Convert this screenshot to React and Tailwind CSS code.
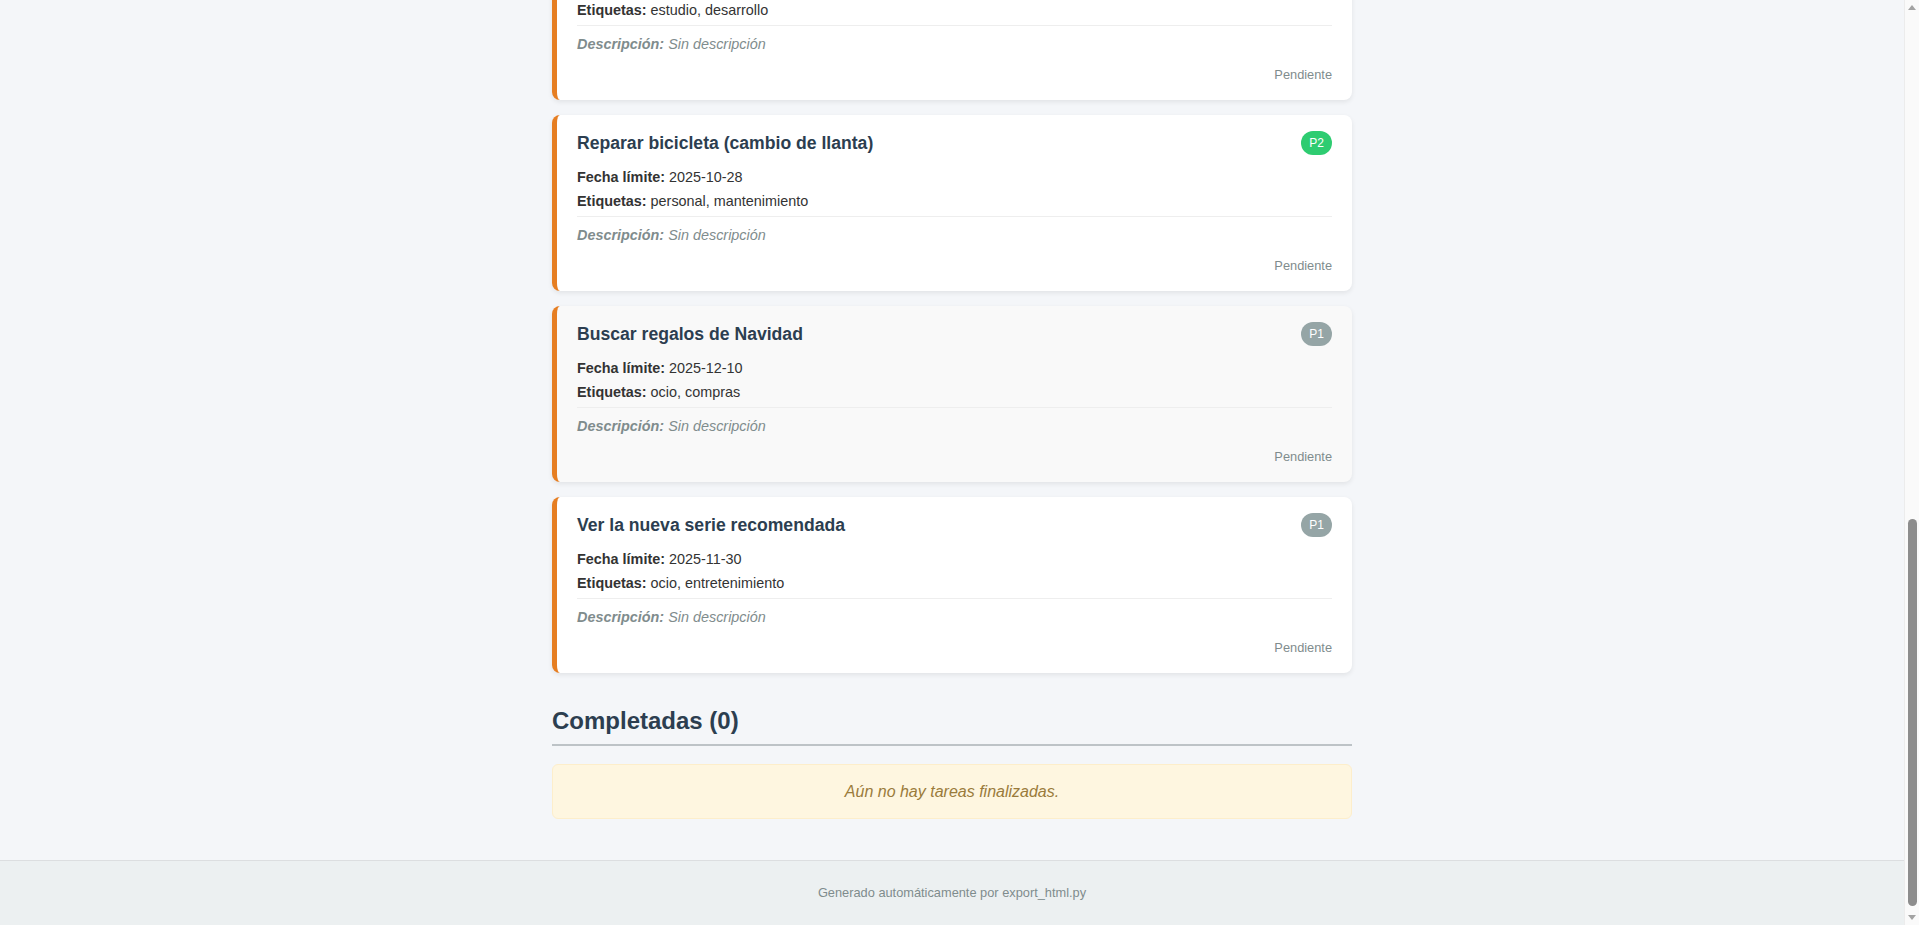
import React, { useLayoutEffect, useRef } from "react";

const pendientes = [
  { t: "Preparar presentación trimestral", f: "2025-10-20", e: "trabajo, reuniones", p: "P3", d: "Incluir métricas del equipo y objetivos del próximo trimestre." },
  { t: "Pagar factura de electricidad", f: "2025-10-22", e: "hogar, finanzas", p: "P3", d: null },
  { t: "Llamar al dentista para cita", f: "2025-10-25", e: "salud, personal", p: "P2", d: null },
  { t: "Renovar pasaporte", f: "2025-11-05", e: "trámites, viajes", p: "P2", d: null },
  { t: "Terminar curso de Python", f: "2025-11-15", e: "estudio, desarrollo", p: "P2", d: null },
  { t: "Reparar bicicleta (cambio de llanta)", f: "2025-10-28", e: "personal, mantenimiento", p: "P2", d: null },
  { t: "Buscar regalos de Navidad", f: "2025-12-10", e: "ocio, compras", p: "P1", d: null, hover: true },
  { t: "Ver la nueva serie recomendada", f: "2025-11-30", e: "ocio, entretenimiento", p: "P1", d: null },
];

function Badge({ p }) {
  const color = p === "P3" ? "bg-[#e74c3c]" : p === "P2" ? "bg-[#2ecc71]" : "bg-[#95a5a6]";
  return (
    <span className={`${color} inline-block h-6 rounded-full px-2 text-xs leading-6 text-white`}>{p}</span>
  );
}

function Card({ task }) {
  return (
    <div
      className={`${task.hover ? "bg-[#f9f9f9]" : "bg-white"} rounded-lg border-l-[5px] border-[#e67e22] px-5 pt-4 pb-[17px] shadow-[0_2px_5px_rgba(0,0,0,0.08)]`}
    >
      <div className="flex h-6 items-center justify-between">
        <h3 className="text-[17.6px] leading-[22px] font-bold text-[#2c3e50]">{task.t}</h3>
        <Badge p={task.p} />
      </div>
      <p className="mt-3 text-[14.4px] leading-5 text-[#333]">
        <span className="font-bold">Fecha límite:</span> {task.f}
      </p>
      <p className="mt-1 text-[14.4px] leading-5 text-[#333]">
        <span className="font-bold">Etiquetas:</span> {task.e}
      </p>
      <div className="mt-[5px] border-t border-[#eeeeee] pt-2">
        {task.d ? (
          <p className="text-[14.4px] leading-5 text-[#555]">
            <span className="font-bold">Descripción:</span> {task.d}
          </p>
        ) : (
          <p className="text-[14.4px] leading-5 text-[#7f8c8d] italic">
            <span className="font-bold">Descripción:</span> Sin descripción
          </p>
        )}
      </div>
      <p className="mt-[13px] text-right text-[12.8px] leading-4 text-[#7f8c8d]">Pendiente</p>
    </div>
  );
}

function Scrollbar() {
  return (
    <div className="flex h-full w-[15px] shrink-0 flex-col border-l border-[#ececec] bg-[#fafafa]">
      <div className="flex h-[15px] items-center justify-center">
        <svg width="8" height="5" viewBox="0 0 8 5">
          <polygon points="4,0 8,5 0,5" fill="#a3a3a3" />
        </svg>
      </div>
      <div className="flex flex-1 flex-col justify-end pb-1">
        <div className="mx-auto h-[387px] w-[9px] rounded-full bg-[#8d8d8d]" />
      </div>
      <div className="flex h-[15px] items-center justify-center">
        <svg width="8" height="5" viewBox="0 0 8 5">
          <polygon points="0,0 8,0 4,5" fill="#a3a3a3" />
        </svg>
      </div>
    </div>
  );
}

export default function App() {
  const ref = useRef(null);
  useLayoutEffect(() => {
    if (ref.current) ref.current.scrollTop = ref.current.scrollHeight;
  }, []);
  return (
    <div className="flex h-screen bg-[#f4f6f9] font-['Liberation_Sans',Arial,sans-serif]">
      <div ref={ref} className="h-full flex-1 overflow-hidden">
        <main className="mx-auto w-[800px] pt-8 pb-[41px]">
          <header className="pb-5 text-center">
            <h1 className="text-[32px] leading-10 font-bold text-[#2c3e50]">Mis Tareas</h1>
            <p className="mt-2 text-sm leading-5 text-[#7f8c8d]">Exportado el 2025-10-18 · 8 pendientes · 0 completadas</p>
          </header>

          <h2 className="mt-[30px] border-b-2 border-[#bdc3c7] pb-[9px] text-[24px] leading-[29px] font-bold text-[#2c3e50]">
            Pendientes (8)
          </h2>
          <div className="mt-[18px] flex flex-col gap-[15px]">
            {pendientes.map((t, i) => (
              <Card key={i} task={t} />
            ))}
          </div>

          <h2 className="mt-[33px] border-b-2 border-[#bdc3c7] pb-[9px] text-[24px] leading-[29px] font-bold text-[#2c3e50]">
            Completadas (0)
          </h2>
          <div className="mt-[18px] rounded-md border border-[#fdeecb] bg-[#fef6e0] py-4 text-center text-base leading-[21px] text-[#9a7b3b] italic">
            Aún no hay tareas finalizadas.
          </div>
        </main>
        <footer className="border-t border-[#dcdee0] bg-[#ecf0f1] py-[22px] text-center text-[12.8px] leading-5 text-[#7f8c8d]">
          Generado automáticamente por export_html.py
        </footer>
      </div>
      <Scrollbar />
    </div>
  );
}
